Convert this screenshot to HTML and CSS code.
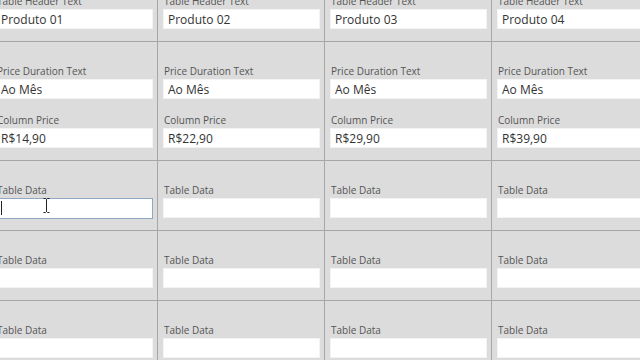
FILE: index.html
```
<!DOCTYPE html>
<html lang="pt">
<head>
  <meta charset="UTF-8" />
  <meta name="viewport" content="width=device-width, initial-scale=1.0"/>
  <title>Pricing Table Settings</title>
  <link rel="stylesheet" href="styles.css">
</head>
<body>
  <div class="grid">
    <div class="cell"><div class="field"><label>Table Header Text</label><input type="text" value="Produto 01"></div></div>
    <div class="cell"><div class="field"><label>Table Header Text</label><input type="text" value="Produto 02"></div></div>
    <div class="cell"><div class="field"><label>Table Header Text</label><input type="text" value="Produto 03"></div></div>
    <div class="cell"><div class="field"><label>Table Header Text</label><input type="text" value="Produto 04"></div></div>

    <div class="cell">
      <div class="field"><label>Price Duration Text</label><input type="text" value="Ao Mês"></div>
      <div class="field"><label>Column Price</label><input type="text" value="R$14,90"></div>
    </div>
    <div class="cell">
      <div class="field"><label>Price Duration Text</label><input type="text" value="Ao Mês"></div>
      <div class="field"><label>Column Price</label><input type="text" value="R$22,90"></div>
    </div>
    <div class="cell">
      <div class="field"><label>Price Duration Text</label><input type="text" value="Ao Mês"></div>
      <div class="field"><label>Column Price</label><input type="text" value="R$29,90"></div>
    </div>
    <div class="cell">
      <div class="field"><label>Price Duration Text</label><input type="text" value="Ao Mês"></div>
      <div class="field"><label>Column Price</label><input type="text" value="R$39,90"></div>
    </div>

    <div class="cell">
      <div class="field">
        <label>Table Data</label>
        <div class="input-wrap">
          <input type="text" class="focused">
          <span class="caret"></span>
          <svg class="ibeam" width="7" height="15" viewBox="0 0 7 15">
            <path d="M0.5 0.5h2l1 1 1-1h2M3.5 1.5v12M0.5 14.5h2l1-1 1 1h2" fill="none" stroke="#222" stroke-width="1"/>
          </svg>
        </div>
      </div>
    </div>
    <div class="cell"><div class="field"><label>Table Data</label><input type="text"></div></div>
    <div class="cell"><div class="field"><label>Table Data</label><input type="text"></div></div>
    <div class="cell"><div class="field"><label>Table Data</label><input type="text"></div></div>

    <div class="cell"><div class="field"><label>Table Data</label><input type="text"></div></div>
    <div class="cell"><div class="field"><label>Table Data</label><input type="text"></div></div>
    <div class="cell"><div class="field"><label>Table Data</label><input type="text"></div></div>
    <div class="cell"><div class="field"><label>Table Data</label><input type="text"></div></div>

    <div class="cell"><div class="field"><label>Table Data</label><input type="text"></div></div>
    <div class="cell"><div class="field"><label>Table Data</label><input type="text"></div></div>
    <div class="cell"><div class="field"><label>Table Data</label><input type="text"></div></div>
    <div class="cell"><div class="field"><label>Table Data</label><input type="text"></div></div>
  </div>
</body>
</html>
```

FILE: styles.css
```
* {
  margin: 0;
  padding: 0;
  box-sizing: border-box;
  font-family: 'Open Sans', 'Liberation Sans', sans-serif;
}

html, body {
  width: 640px;
  height: 360px;
  overflow: hidden;
}

body {
  background: #dcdcdc;
  color: #444;
}

.grid {
  display: grid;
  grid-template-columns: repeat(4, 167px);
  margin-left: -9px;
  margin-top: -28px;
}

.cell {
  border-right: 1px solid #a6a6a6;
  border-bottom: 1px solid #a6a6a6;
  padding: 22px 4px 12px 5px;
  display: flex;
  flex-direction: column;
  gap: 14px;
}

.field label {
  display: block;
  font-size: 10px;
  line-height: 14px;
  height: 15px;
  color: #555;
  padding-left: 1px;
  white-space: nowrap;
}

.field input {
  display: block;
  width: 100%;
  height: 20px;
  border: 1px solid #f3f3f3;
  background: #fff;
  padding: 0 4px;
  font-size: 12px;
  color: #333;
  outline: none;
}

.input-wrap {
  position: relative;
}

.field input.focused {
  height: 21px;
  margin-bottom: -1px;
  border: 1px solid #8fa8c4;
}

.caret {
  position: absolute;
  left: 5px;
  top: 3px;
  width: 1px;
  height: 14px;
  background: #222;
}

.ibeam {
  position: absolute;
  left: 47px;
  top: 0px;
}
```
